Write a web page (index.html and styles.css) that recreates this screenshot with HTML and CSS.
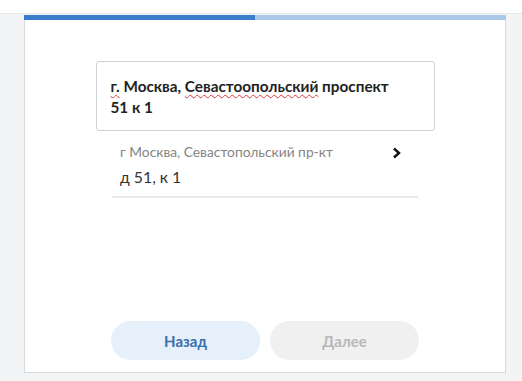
FILE: index.html
```html
<!DOCTYPE html>
<html lang="ru">
<head>
<meta charset="utf-8">
<link rel="stylesheet" href="styles.css">
</head>
<body>
<div class="topbar"></div>
<div class="stage">
  <div class="card">
    <div class="progress"><div class="progress-fill" style="width:231px"></div></div>
    <div class="content">
      <div class="field"><span class="misspelled">г.</span> Москва, <span class="misspelled">Севастоопольский</span> проспект <span class="nowrap">51 к 1</span></div>
      <div class="suggestion">
        <div class="sugg-text">
          <div class="sugg-street">г Москва, Севастопольский пр-кт</div>
          <div class="sugg-house">д 51, к 1</div>
        </div>
        <svg class="chevron" width="10" height="12" viewBox="0 0 10 12"><path d="M2 1.5 L7 6 L2 10.5" fill="none" stroke="#111" stroke-width="2.4"/></svg>
      </div>
      <div class="spacer"></div>
      <div class="buttons">
        <button class="btn btn-back">Назад</button>
        <button class="btn btn-next">Далее</button>
      </div>
    </div>
  </div>
</div>
</body>
</html>
```
FILE: styles.css
```css
html, body {
  margin: 0;
  padding: 0;
  height: 100%;
}
body {
  background: #f2f4f6;
  font-family: Lato, "Noto Sans", sans-serif;
  display: flex;
  flex-direction: column;
}
.topbar {
  height: 13px;
  background: #fff;
  border-bottom: 1px solid #e4e7ea;
}
.stage {
  flex: 1;
  padding: 1px 16px 0 24px;
  display: flex;
  flex-direction: column;
}
.card {
  height: 357px;
  background: #fff;
  border: 1px solid #d9dcdf;
  border-top: none;
  display: flex;
  flex-direction: column;
}
.progress {
  height: 5px;
  background: #aac9ea;
  margin: 0 -1px;
}
.progress-fill {
  height: 100%;
  background: #3a7ecb;
}
.content {
  flex: 1;
  display: flex;
  flex-direction: column;
  align-items: center;
  padding-top: 41px;
  padding-bottom: 12px;
}
.field {
  box-sizing: border-box;
  width: 339px;
  height: 70px;
  border: 1px solid #cfd2d5;
  border-radius: 3px;
  padding: 14px 24px 0 14px;
  font-size: 15.3px;
  font-weight: 700;
  line-height: 21px;
  color: #222;
}
.nowrap {
  white-space: nowrap;
}
.misspelled {
  text-decoration: underline wavy #e0393e;
  text-decoration-thickness: 1px;
  text-underline-offset: 2px;
}
.suggestion {
  box-sizing: border-box;
  width: 306px;
  display: flex;
  align-items: flex-start;
  justify-content: space-between;
  padding: 13px 16px 9px 8px;
  border-bottom: 2px solid #e8e9ea;
}
.sugg-street {
  font-size: 13.8px;
  line-height: 16px;
  color: #858585;
}
.sugg-house {
  font-size: 15.8px;
  line-height: 20px;
  margin-top: 7px;
  color: #333;
}
.chevron {
  margin-top: 3px;
}
.spacer {
  flex: 1;
}
.buttons {
  display: flex;
  gap: 10px;
}
.btn {
  width: 149px;
  height: 39px;
  border: none;
  border-radius: 20px;
  font-family: Lato, "Noto Sans", sans-serif;
  font-size: 15px;
  font-weight: 700;
  padding: 0;
}
.btn-back {
  background: #e5f0fb;
  color: #3a6ea8;
}
.btn-next {
  background: #f0f0f0;
  color: #b8b8b8;
}
```
